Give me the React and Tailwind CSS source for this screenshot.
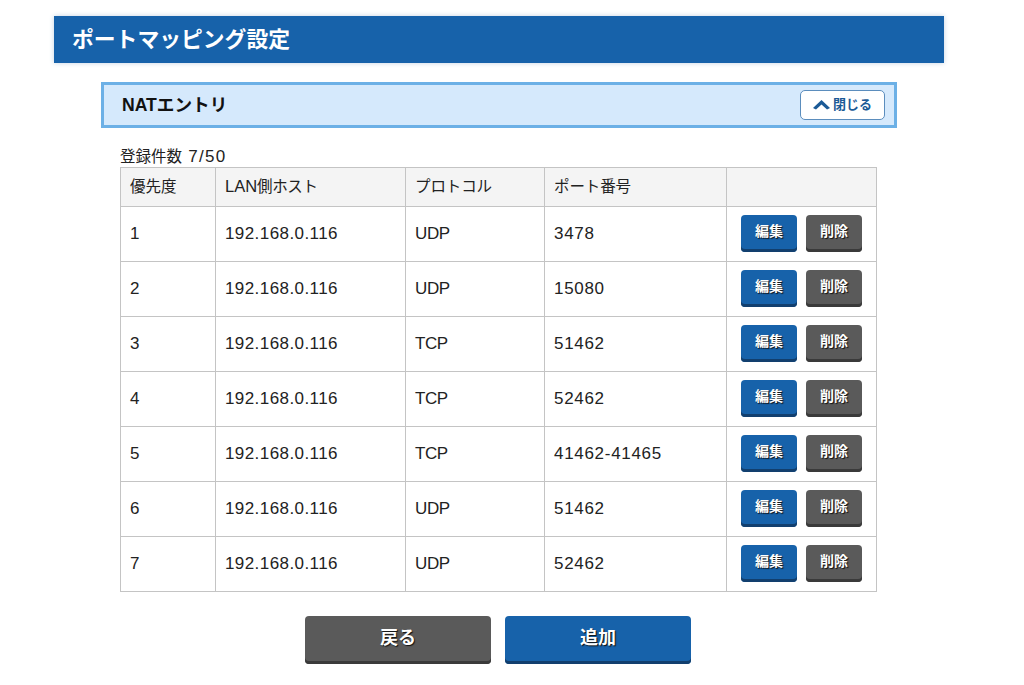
const rows = [
  ["1", "UDP", "3478"],
  ["2", "UDP", "15080"],
  ["3", "TCP", "51462"],
  ["4", "TCP", "52462"],
  ["5", "TCP", "41462-41465"],
  ["6", "UDP", "51462"],
  ["7", "UDP", "52462"],
];

const font = "font-['Liberation_Sans','Noto_Sans_CJK_JP',sans-serif]";
const blueShadow = "shadow-[inset_0_-3px_0_#123f6e]";
const grayShadow = "shadow-[inset_0_-3px_0_#3a3a3a]";
const txtShadow = "[text-shadow:1px_1px_1px_#111]";

function Th({ className = "", children }) {
  return (
    <th className={`border border-[#c4c4c4] bg-[#f4f4f4] h-[39px] px-[9px] text-left font-normal text-[15.5px] ${className}`}>
      {children}
    </th>
  );
}

function Td({ children, className = "" }) {
  return <td className={`border border-[#c4c4c4] h-[55px] ${className}`}>{children}</td>;
}

export default function App() {
  return (
    <div className={`${font} w-[1024px] h-[685px] overflow-hidden bg-white text-[#222] pt-4 pl-[54px]`}>
      <div className="w-[890px] h-[47px] bg-[#1762aa] shadow-[0_0_5px_#c5d3e2] text-white text-[21.8px] font-bold flex items-center pl-[18px] pt-[1px]">
        ポートマッピング設定
      </div>

      <div className="ml-[47px] mt-[19px] w-[796px] h-[46px] border-[3px] border-[#6cb0e6] bg-[#d5e9fc] flex items-center justify-between pl-[18px] pr-[9px]">
        <span className="text-[17.6px] font-bold text-[#111]">NATエントリ</span>
        <button className="w-[85px] h-[30px] rounded-[5px] border border-[#5b8dbd] bg-white flex items-center justify-center gap-[3px] text-[#1b5a96] text-[13px] font-bold">
          <svg width="17" height="10" viewBox="0 0 17 10" fill="#1b5a96">
            <path d="M8.5 0 L17 8 L14 9.5 L8.5 4.5 L3 9.5 L0 8 Z" />
          </svg>
          閉じる
        </button>
      </div>

      <div className="ml-[66px] mt-[19px] text-[15.5px] leading-[20px] h-[20px]">
        登録件数 <span className="ml-[2px] text-[17px] tracking-[1.3px]">7/50</span>
      </div>

      <table className="ml-[66px] w-[756px] table-fixed border-collapse text-[17px]">
        <colgroup>
          <col className="w-[95px]" />
          <col className="w-[190px]" />
          <col className="w-[139px]" />
          <col className="w-[182px]" />
          <col className="w-[150px]" />
        </colgroup>
        <thead>
          <tr>
            <Th>優先度</Th>
            <Th className="pb-[2px]">
              <span className="text-[16.5px]">LAN</span>
              <span className="tracking-[-0.4px]">側ホスト</span>
            </Th>
            <Th className="tracking-[-0.1px]">プロトコル</Th>
            <Th className="tracking-[-0.1px]">ポート番号</Th>
            <Th />
          </tr>
        </thead>
        <tbody>
          {rows.map(([n, proto, port]) => (
            <tr key={n}>
              <Td className="pl-[9px]">{n}</Td>
              <Td className="pl-[9px] tracking-[0.42px]">192.168.0.116</Td>
              <Td className="pl-[9px] tracking-[-0.4px]">{proto}</Td>
              <Td className="pl-[9px] tracking-[0.7px]">{port}</Td>
              <Td className="pl-[14px]">
                <div className="flex gap-[9px] pb-[2px]">
                  <button className={`w-[56px] h-[37px] rounded-[4px] bg-[#1762aa] ${blueShadow} text-white text-[14px] font-bold pb-[4px] ${txtShadow}`}>
                    編集
                  </button>
                  <button className={`w-[56px] h-[37px] rounded-[4px] bg-[#5a5a5a] ${grayShadow} text-white text-[14px] font-bold pb-[4px] ${txtShadow}`}>
                    削除
                  </button>
                </div>
              </Td>
            </tr>
          ))}
        </tbody>
      </table>

      <div className="flex gap-[14px] ml-[251px] mt-6">
        <button className={`w-[186px] h-[48px] rounded-[4px] bg-[#5a5a5a] ${grayShadow} text-white text-[18px] font-bold pb-[3px] ${txtShadow}`}>
          戻る
        </button>
        <button className={`w-[186px] h-[48px] rounded-[4px] bg-[#1762aa] ${blueShadow} text-white text-[18px] font-bold pb-[3px] ${txtShadow}`}>
          追加
        </button>
      </div>
    </div>
  );
}
